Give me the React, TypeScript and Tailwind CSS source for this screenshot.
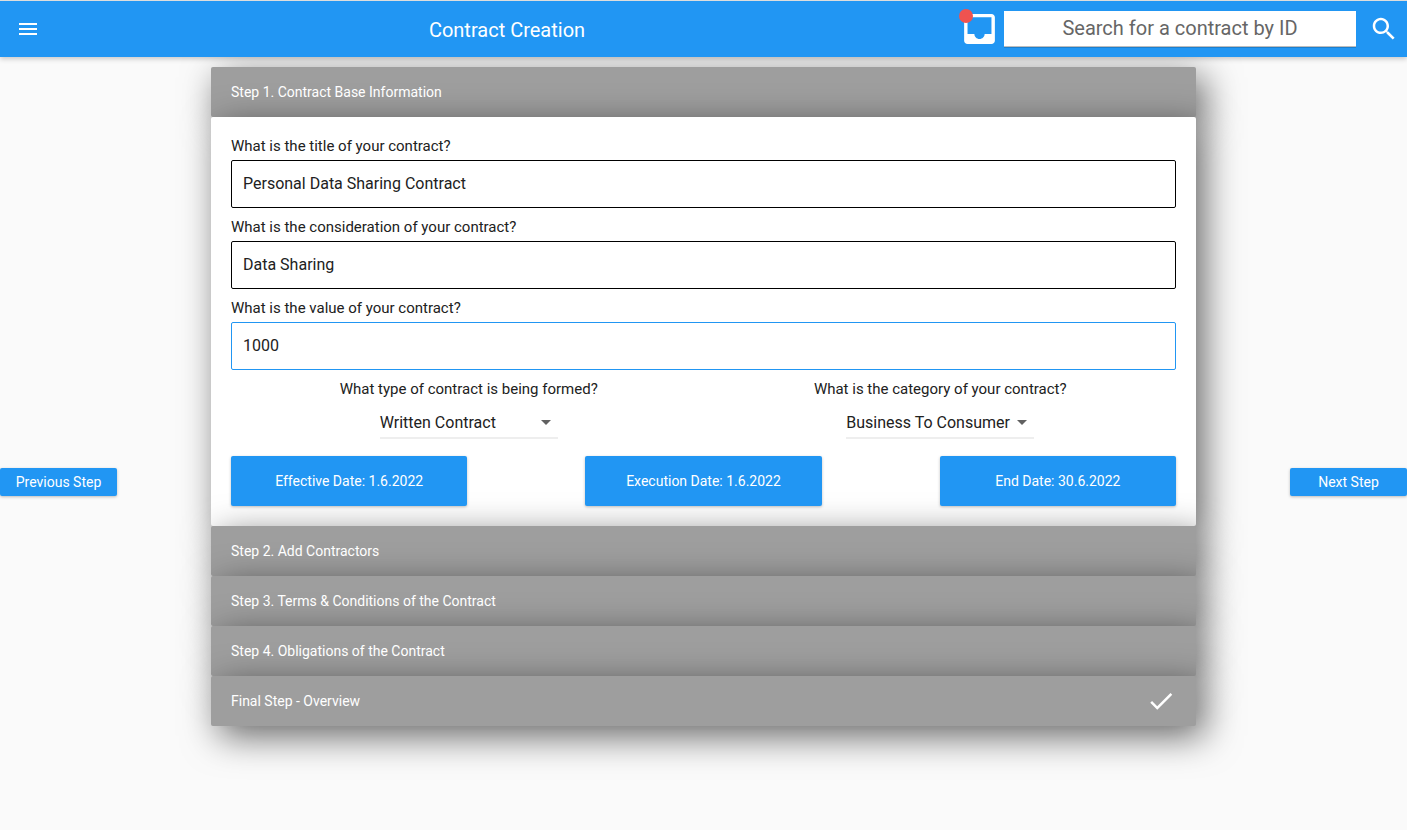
import React from "react";

const blueShadow = "shadow-[0_1px_3px_rgba(0,0,0,0.25)]";
const cardShadow = "shadow-[8px_10px_36px_rgba(0,0,0,0.6)]";

function StepBar({ title, done }: { title: string; done?: boolean }) {
  return (
    <div className={`flex h-[50px] items-center justify-between rounded-[2px] bg-[#9e9e9e] px-5 text-white ${cardShadow}`}>
      <span className="text-[14px] leading-5">{title}</span>
      {done && (
        <svg viewBox="0 0 24 24" className="h-[30px] w-[30px]" fill="currentColor">
          <path d="M9 16.17L4.83 12l-1.42 1.41L9 19 21 7l-1.41-1.41z" />
        </svg>
      )}
    </div>
  );
}

function Field({ label, value, active }: { label: string; value: string; active?: boolean }) {
  return (
    <div className="mb-[10px]">
      <label className="block h-[23px] text-[15px] leading-[18px]">{label}</label>
      <input
        defaultValue={value}
        className={`block h-12 w-full rounded-[2px] border bg-white px-[11px] pb-[2px] text-[16px] outline-none ${active ? "border-[#2196f3]" : "border-black"}`}
      />
    </div>
  );
}

function Choice({ label, value, width }: { label: string; value: string; width: string }) {
  return (
    <div className="flex flex-1 flex-col items-center">
      <span className="text-[15px] leading-[18px]">{label}</span>
      <button className={`mt-[10px] flex h-[31px] items-center justify-between border-b-2 border-[#eeeeee] text-[16px] whitespace-nowrap ${width}`}>
        <span>{value}</span>
        <svg viewBox="0 0 24 24" className="mb-[2px] h-6 w-6 shrink-0 text-[#616161]" fill="currentColor">
          <path d="M7 10l5 5 5-5z" />
        </svg>
      </button>
    </div>
  );
}

function DateButton({ children }: { children: React.ReactNode }) {
  return (
    <button className={`h-[50px] w-[236.3px] rounded-[2px] bg-[#2196f3] text-[14px] text-white ${blueShadow}`}>
      {children}
    </button>
  );
}

export default function App() {
  return (
    <div className="flex h-[830px] w-full flex-col overflow-hidden bg-[#fafafa] font-[Roboto,sans-serif] text-[#212121]">
      <header className="z-10 flex h-[57px] shrink-0 items-center border-t border-[#dddddd] bg-[#2196f3] text-white shadow-[0_2px_5px_rgba(0,0,0,0.2)]">
        <button className="ml-4" aria-label="Menu">
          <svg viewBox="0 0 24 24" className="h-6 w-6" fill="currentColor">
            <path d="M3 18h18v-2H3v2zm0-5h18v-2H3v2zm0-7v2h18V6H3z" />
          </svg>
        </button>
        <h1 className="ml-[58px] w-[818px] pt-[2px] text-center text-[20px]">Contract Creation</h1>
        <div className="relative ml-[43px] h-[40px] w-[40px]">
          <svg viewBox="0 0 24 24" className="h-[40px] w-[41px]" preserveAspectRatio="none" fill="currentColor">
            <path d="M19 3H4.99c-1.11 0-1.98.89-1.98 2L3 19c0 1.1.88 2 1.99 2H19c1.1 0 2-.9 2-2V5c0-1.11-.9-2-2-2zm0 12h-4c0 1.66-1.35 3-3 3s-3-1.34-3-3H4.99V5H19v10z" />
          </svg>
          <span className="absolute top-0 left-0 h-[14px] w-[14px] rounded-full bg-[#ef5350]" />
        </div>
        <input
          placeholder="Search for a contract by ID"
          className="ml-[5px] h-9 w-[352px] border-b border-[#bdbdbd] bg-white pb-[2px] text-center text-[20px] text-[#666] shadow-[0_1px_0_rgba(0,0,0,0.15)] outline-none placeholder:text-[#666]"
        />
        <button className="ml-[13px]" aria-label="Search">
          <svg viewBox="0 0 24 24" className="h-[30px] w-[30px]" fill="currentColor">
            <path d="M15.5 14h-.79l-.28-.27C15.41 12.59 16 11.11 16 9.5 16 5.91 13.09 3 9.5 3S3 5.91 3 9.5 5.91 16 9.5 16c1.61 0 3.09-.59 4.23-1.57l.27.28v.79l5 4.99L20.49 19l-4.99-5zm-6 0C7.01 14 5 11.99 5 9.5S7.01 5 9.5 5 14 7.01 14 9.5 11.99 14 9.5 14z" />
          </svg>
        </button>
      </header>

      <main className="flex items-start justify-between">
        <button className={`mt-[411px] h-7 w-[117px] rounded-[2px] bg-[#2196f3] text-[14px] text-white ${blueShadow}`}>
          Previous Step
        </button>
        <div className="mt-[10px] w-[985px]">
          <StepBar title="Step 1. Contract Base Information" />
          <section className={`h-[409px] rounded-[2px] bg-white px-5 pt-5 ${cardShadow}`}>
            <Field label="What is the title of your contract?" value="Personal Data Sharing Contract" />
            <Field label="What is the consideration of your contract?" value="Data Sharing" />
            <Field label="What is the value of your contract?" value="1000" active />
            <div className="flex pl-[2px]">
              <Choice label="What type of contract is being formed?" value="Written Contract" width="w-[178px]" />
              <Choice label="What is the category of your contract?" value="Business To Consumer" width="w-[188px]" />
            </div>
            <div className="mt-[17px] flex justify-between">
              <DateButton>Effective Date: 1.6.2022</DateButton>
              <DateButton>Execution Date: 1.6.2022</DateButton>
              <DateButton>End Date: 30.6.2022</DateButton>
            </div>
          </section>
          <StepBar title="Step 2. Add Contractors" />
          <StepBar title="Step 3. Terms & Conditions of the Contract" />
          <StepBar title="Step 4. Obligations of the Contract" />
          <StepBar title="Final Step - Overview" done />
        </div>
        <button className={`mt-[411px] h-7 w-[117px] rounded-[2px] bg-[#2196f3] text-[14px] text-white ${blueShadow}`}>
          Next Step
        </button>
      </main>
    </div>
  );
}
